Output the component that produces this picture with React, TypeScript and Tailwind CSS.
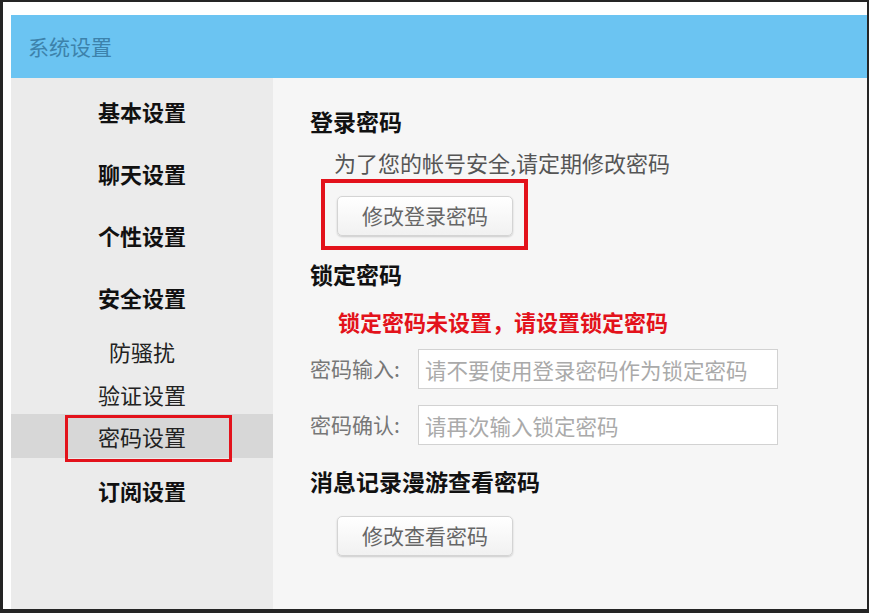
const font = { fontFamily: '"Noto Sans CJK SC", "Noto Sans", sans-serif' };

const SideItem = ({
  label,
  bold,
  active,
  boxed,
  h,
}: {
  label: string;
  bold?: boolean;
  active?: boolean;
  boxed?: boolean;
  h: string;
}) => (
  <div
    className={`relative flex items-center justify-center ${h} ${
      active ? "bg-[#d7d7d7]" : ""
    }`}
  >
    <span
      className={`text-[22px] leading-none ${
        bold ? "font-bold text-[#111]" : "text-[#222]"
      }`}
    >
      {label}
    </span>
    {boxed && (
      <div className="absolute left-[54px] top-[1px] h-[47px] w-[167px] border-[3px] border-[#e3121b]" />
    )}
  </div>
);

const GrayButton = ({ label }: { label: string }) => (
  <button className="h-[40px] w-[176px] rounded-[5px] border border-[#d4d4d4] bg-gradient-to-b from-white to-[#f1f1f1] text-[21px] text-[#666] shadow-[0_1px_2px_rgba(0,0,0,0.18)]">
    {label}
  </button>
);

const Field = ({ label, placeholder }: { label: string; placeholder: string }) => (
  <div className="flex items-center">
    <span className="w-[108px] text-[21px] text-[#777]">{label}</span>
    <input
      className="h-[40px] w-[360px] border border-[#d2d2d2] bg-white px-[6px] text-[21.5px] outline-none placeholder:text-[#aaa]"
      placeholder={placeholder}
    />
  </div>
);

export default function App() {
  return (
    <div
      style={font}
      className="h-[613px] w-[869px] overflow-hidden bg-[#252525] pb-[4px] pl-[3px] pr-[2px] pt-[2px]"
    >
      <div className="flex h-full flex-col bg-white pl-[8px] pt-[13px]">
        <div className="flex h-[63px] items-center bg-[#6bc4f2] pl-[17px] text-[21px] text-[#3d82ab]">
          系统设置
        </div>
        <div className="flex flex-1">
          <div className="w-[262px] bg-[#ebebeb] pt-[2px]">
            <SideItem label="基本设置" bold h="h-[62px]" />
            <SideItem label="聊天设置" bold h="h-[62px]" />
            <SideItem label="个性设置" bold h="h-[62px]" />
            <SideItem label="安全设置" bold h="h-[62px]" />
            <SideItem label="防骚扰" h="h-[46px]" />
            <SideItem label="验证设置" h="h-[40px]" />
            <SideItem label="密码设置" active boxed h="h-[44px]" />
            <SideItem label="订阅设置" bold h="h-[64px]" />
          </div>
          <div className="flex-1 bg-[#f6f6f6] pl-[37px] pt-[32px] text-[#111]">
            <div className="text-[23px] font-bold leading-none">登录密码</div>
            <div className="mt-[18px] pl-[24px] text-[22px] leading-none text-[#555]">
              为了您的帐号安全,请定期修改密码
            </div>
            <div className="ml-[11px] mt-[6px] inline-flex border-[4px] border-[#e3121b] pb-[10px] pl-[12px] pr-[11px] pt-[13px]">
              <GrayButton label="修改登录密码" />
            </div>
            <div className="mt-[13px] text-[23px] font-bold leading-none">锁定密码</div>
            <div className="mt-[24px] pl-[28px] text-[22px] font-bold leading-none text-[#e3121b]">
              锁定密码未设置，请设置锁定密码
            </div>
            <div className="mt-[17px] flex flex-col gap-[16px]">
              <Field label="密码输入:" placeholder="请不要使用登录密码作为锁定密码" />
              <Field label="密码确认:" placeholder="请再次输入锁定密码" />
            </div>
            <div className="mt-[25px] text-[23px] font-bold leading-none">
              消息记录漫游查看密码
            </div>
            <div className="mt-[23px] pl-[27px]">
              <GrayButton label="修改查看密码" />
            </div>
          </div>
        </div>
      </div>
    </div>
  );
}
